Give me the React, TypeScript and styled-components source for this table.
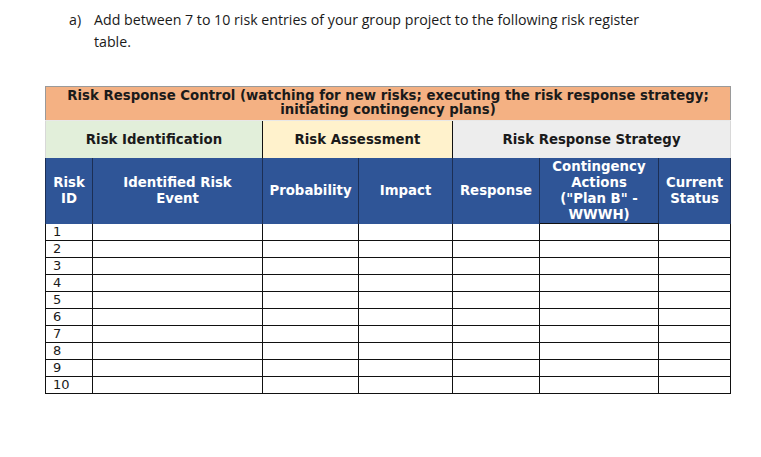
import React from "react";
import styled, { createGlobalStyle } from "styled-components";

const Global = createGlobalStyle`
  html, body { margin: 0; padding: 0; background: #ffffff; }
  body { font-family: "Liberation Sans", Arial, sans-serif; }
`;

const Page = styled.div`
  width: 761px;
  height: 457px;
  padding: 9px 0 0 45px;
  box-sizing: border-box;
`;

const Question = styled.div`
  display: flex;
  font-family: "Open Sans", "Liberation Sans", sans-serif;
  font-size: 14.2px;
  line-height: 22px;
  color: #1a1a1a;
  padding-left: 24px;
  width: 590px;
`;

const Marker = styled.span`
  flex: 0 0 25px;
`;

const QuestionText = styled.span`
  flex: 1;
`;

const Table = styled.table`
  margin-top: 33px;
  border-collapse: collapse;
  table-layout: fixed;
  width: 686px;
  font-family: "DejaVu Sans", Verdana, sans-serif;
`;

const TitleCell = styled.th`
  background: #f4b183;
  height: 31px;
  padding: 2px 4px 0;
  font-size: 13.3px;
  line-height: 14px;
  font-weight: bold;
  color: #1a1a1a;
  text-align: center;
  vertical-align: top;
  border: 1px solid #9a9a9a;
  border-bottom: 1px solid #e8e8e8;
`;

const GroupCell = styled.th<{ $bg: string }>`
  background: ${(p) => p.$bg};
  height: 37px;
  font-size: 13.3px;
  font-weight: bold;
  color: #1a1a1a;
  text-align: center;
  vertical-align: middle;
  border-left: 1px solid #111;
  border-right: 1px solid #111;
  border-top: none;
  border-bottom: none;
  padding: 0;
  &:first-child { border-left: 1px solid #d8d8d8; }
  &:last-child { border-right: 1px solid #d8d8d8; }
`;

const ColHead = styled.th<{ $boxed?: boolean }>`
  background: #2f5597;
  height: 63px;
  padding: 1px 2px 0;
  font-size: 13.3px;
  line-height: 16px;
  font-weight: bold;
  color: #ffffff;
  text-align: center;
  vertical-align: middle;
  border-left: 1px solid #1c2f55;
  border-right: 1px solid #1c2f55;
  border-top: none;
  border-bottom: ${(p) => (p.$boxed ? "1px solid #111" : "none")};
`;

const Cell = styled.td<{ $open?: boolean }>`
  height: 16px;
  padding: 0 0 0 7px;
  font-size: 13px;
  line-height: 16px;
  color: #1a1a1a;
  vertical-align: bottom;
  border: 1px solid #111;
  ${(p) => (p.$open ? "border-top: none;" : "")}
`;

const widths = [47, 170, 96, 94, 87, 119, 72];

export default function App() {
  const rows = Array.from({ length: 10 }, (_, i) => i + 1);
  return (
    <>
      <Global />
      <Page>
        <Question>
          <Marker>a)</Marker>
          <QuestionText>
            Add between 7 to 10 risk entries of your group project to the following risk register table.
          </QuestionText>
        </Question>
        <Table>
          <colgroup>
            {widths.map((w, i) => (
              <col key={i} style={{ width: w }} />
            ))}
          </colgroup>
          <thead>
            <tr>
              <TitleCell colSpan={7}>
                Risk Response Control (watching for new risks; executing the risk response strategy;
                <br />
                initiating contingency plans)
              </TitleCell>
            </tr>
            <tr>
              <GroupCell $bg="#e2efda" colSpan={2}>Risk Identification</GroupCell>
              <GroupCell $bg="#fff2cc" colSpan={2}>Risk Assessment</GroupCell>
              <GroupCell $bg="#ededed" colSpan={3}>Risk Response Strategy</GroupCell>
            </tr>
            <tr>
              <ColHead>Risk<br />ID</ColHead>
              <ColHead>Identified Risk<br />Event</ColHead>
              <ColHead>Probability</ColHead>
              <ColHead>Impact</ColHead>
              <ColHead>Response</ColHead>
              <ColHead $boxed>Contingency<br />Actions<br />("Plan B" -<br />WWWH)</ColHead>
              <ColHead>Current<br />Status</ColHead>
            </tr>
          </thead>
          <tbody>
            {rows.map((n) => (
              <tr key={n}>
                <Cell $open={n === 1}>{n}</Cell>
                <Cell $open={n === 1} />
                <Cell $open={n === 1} />
                <Cell $open={n === 1} />
                <Cell $open={n === 1} />
                <Cell />
                <Cell $open={n === 1} />
              </tr>
            ))}
          </tbody>
        </Table>
      </Page>
    </>
  );
}
